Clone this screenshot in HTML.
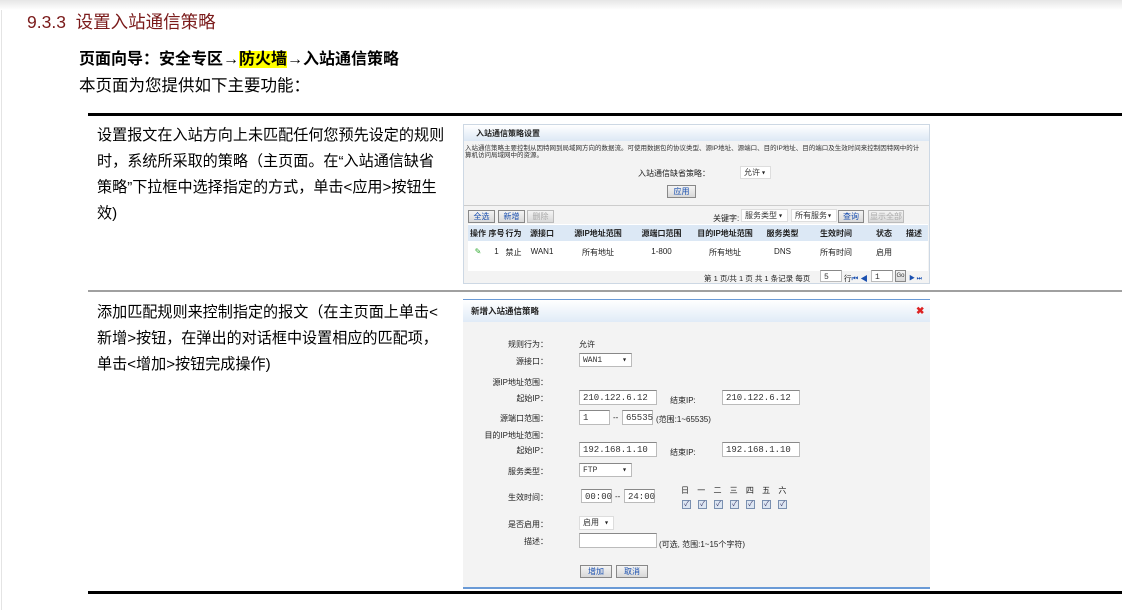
<!DOCTYPE html>
<html><head><meta charset="utf-8">
<style>
*{margin:0;padding:0;box-sizing:border-box}
body{width:1122px;height:610px;background:#fff;position:relative;overflow:hidden;font-family:"Liberation Sans","Noto Sans CJK SC",sans-serif;}
.a{position:absolute;white-space:nowrap}
.s{font-family:"Liberation Sans","Noto Sans CJK SC",sans-serif;font-size:8px;color:#222}
.inp{position:absolute;background:#fff;border:1px solid #bbb;border-top-color:#888;font-size:9px;padding:1px 3px;font-family:"Liberation Mono","Noto Sans CJK SC",monospace;color:#333;height:15px;line-height:12px}
.btn{position:absolute;background:linear-gradient(#f4f4f4,#d8d8d8);border:1px solid #888;font-size:8px;color:#1a50b0;text-align:center;height:13px;line-height:11px}
.sel:after{content:"▾";position:absolute;right:4px;top:1px;font-size:8px;color:#222}
.cb{position:absolute;width:9px;height:9px;border:1px solid #7a90b0;background:#dde6f2;font-size:7px;line-height:7px;text-align:center;color:#336}
</style></head><body>
<div class="a" style="left:0;top:0;width:1122px;height:10px;background:linear-gradient(#e6e6e6,#fff)"></div>
<div class="a" style="left:1px;top:10px;width:1px;height:600px;background:#e4e4e4"></div>
<div class="a" style="left:27px;top:9px;font-size:17.5px;color:#7a1a1a">9.3.3&nbsp; 设置入站通信策略</div>
<div class="a" style="left:79px;top:45px;font-size:16px;font-weight:bold;color:#000">页面向导：安全专区<span style="font-weight:normal">→</span><span style="background:#ffff00">防火墙</span><span style="font-weight:normal">→</span>入站通信策略</div>
<div class="a" style="left:79px;top:72px;font-size:16.5px;color:#000">本页面为您提供如下主要功能：</div>
<div class="a" style="left:88px;top:113px;width:1034px;height:3px;background:#000"></div>
<div class="a" style="left:88px;top:290px;width:1034px;height:2px;background:#a0a0a0"></div>
<div class="a" style="left:88px;top:591px;width:1034px;height:3px;background:#000"></div>
<div class="a" style="left:97px;top:123px;font-size:15.1px;line-height:26px;color:#000">设置报文在入站方向上未匹配任何您预先设定的规则<br>时，系统所采取的策略（主页面。在“入站通信缺省<br>策略”下拉框中选择指定的方式，单击&lt;应用&gt;按钮生<br>效)</div>
<div class="a" style="left:97px;top:300px;font-size:15.1px;line-height:26px;color:#000">添加匹配规则来控制指定的报文（在主页面上单击&lt;<br>新增&gt;按钮，在弹出的对话框中设置相应的匹配项，<br>单击&lt;增加&gt;按钮完成操作)</div>

<!-- screenshot 1 -->
<div class="a" style="left:463px;top:124px;width:467px;height:160px;background:#f3f3f3;border:1px solid #cdd8e4">
 <div class="a s" style="left:0;top:0;width:465px;height:16px;background:linear-gradient(#fff,#dce8f5);font-weight:bold;padding:3px 0 0 12px">入站通信策略设置</div>
 <div class="a s" style="left:1px;top:20px;font-size:6.5px;line-height:7px;white-space:normal;width:460px;color:#333">入站通信策略主要控制从因特网到局域网方向的数据流。可使用数据包的协议类型、源IP地址、源端口、目的IP地址、目的端口及生效时间来控制因特网中的计算机访问局域网中的资源。</div>
 <div class="a s" style="left:174px;top:43px">入站通信缺省策略：</div>
 <div class="inp sel" style="left:276px;top:41px;width:31px;height:13px;font-size:8px;border-color:#ddd">允许</div>
 <div class="btn" style="left:203px;top:60px;width:29px">应用</div>
 <div class="a" style="left:0;top:80px;width:465px;height:1px;background:#ccc"></div>
 <div class="btn" style="left:4px;top:85px;width:27px">全选</div>
 <div class="btn" style="left:34px;top:85px;width:27px">新增</div>
 <div class="btn" style="left:63px;top:85px;width:27px;color:#aaa;border-color:#bbb">删除</div>
 <div class="a s" style="left:249px;top:88px">关键字:</div>
 <div class="inp sel" style="left:277px;top:84px;width:47px;height:13px;font-size:8px;border-color:#ddd">服务类型</div>
 <div class="inp sel" style="left:327px;top:84px;width:46px;height:13px;font-size:8px;border-color:#ddd">所有服务</div>
 <div class="btn" style="left:374px;top:85px;width:26px">查询</div>
 <div class="btn" style="left:404px;top:85px;width:36px;color:#aaa;border-color:#bbb">显示全部</div>
 <div class="a" style="left:4px;top:99px;width:460px;height:47px;background:#fff"></div>
 <div class="a s" style="left:4px;top:100px;width:460px;height:16px;background:#dce8f5;font-weight:bold;display:flex;align-items:center;gap:0">
  <span style="width:20px;text-align:center">操作</span><span style="width:17px;text-align:center">序号</span><span style="width:17px;text-align:center">行为</span><span style="width:40px;text-align:center">源接口</span><span style="width:72px;text-align:center">源IP地址范围</span><span style="width:55px;text-align:center">源端口范围</span><span style="width:72px;text-align:center">目的IP地址范围</span><span style="width:43px;text-align:center">服务类型</span><span style="width:64px;text-align:center">生效时间</span><span style="width:32px;text-align:center">状态</span><span style="width:28px;text-align:center">描述</span></div>
 <div class="a s" style="left:4px;top:122px;width:460px;display:flex">
  <span style="width:20px;text-align:center;color:#3a3">✎</span><span style="width:17px;text-align:center">1</span><span style="width:17px;text-align:center">禁止</span><span style="width:40px;text-align:center">WAN1</span><span style="width:72px;text-align:center">所有地址</span><span style="width:55px;text-align:center">1-800</span><span style="width:72px;text-align:center">所有地址</span><span style="width:43px;text-align:center">DNS</span><span style="width:64px;text-align:center">所有时间</span><span style="width:32px;text-align:center">启用</span><span style="width:28px"></span></div>
 <div class="a s" style="left:240px;top:148px;font-size:7.5px">第 1 页/共 1 页 共 1 条记录 每页</div>
 <div class="inp" style="left:356px;top:145px;width:22px;height:12px;font-size:8px">5</div>
 <div class="a s" style="left:380px;top:148px;font-size:7.5px">行<span style="color:#1a50b0">⏮ ◀</span></div>
 <div class="inp" style="left:407px;top:145px;width:22px;height:12px;font-size:8px">1</div>
 <div class="btn" style="left:431px;top:145px;width:11px;height:12px;font-size:6px;color:#333">Go</div>
 <div class="a s" style="left:445px;top:148px;color:#1a50b0;font-size:6px">▶ ⏭</div>
</div>

<!-- screenshot 2 -->
<div class="a" style="left:463px;top:299px;width:467px;height:290px;background:#f3f3f3;border-top:1px solid #6a9ad6;border-bottom:2px solid #6a9ad6">
 <div class="a s" style="left:0;top:0;width:467px;height:22px;background:linear-gradient(#fff,#e0ebf7);font-weight:bold;padding:5px 0 0 8px;font-size:8.5px">新增入站通信策略</div>
 <div class="a" style="left:453px;top:6px;color:#d22;font-size:10px;font-weight:bold">✖</div>
 <div class="a s" style="right:382px;top:39px">规则行为：</div><div class="a s" style="left:116px;top:39px">允许</div>
 <div class="a s" style="right:382px;top:56px">源接口：</div><div class="inp sel" style="left:116px;top:53px;width:53px;height:14px;font-size:8px">WAN1</div>
 <div class="a s" style="right:382px;top:77px">源IP地址范围：</div>
 <div class="a s" style="right:382px;top:93px">起始IP：</div><div class="inp" style="left:116px;top:90px;width:78px">210.122.6.12</div>
 <div class="a s" style="left:207px;top:95px">结束IP:</div><div class="inp" style="left:259px;top:90px;width:78px">210.122.6.12</div>
 <div class="a s" style="right:382px;top:113px">源端口范围：</div><div class="inp" style="left:116px;top:110px;width:31px">1</div>
 <div class="a s" style="left:150px;top:113px">--</div><div class="inp" style="left:159px;top:110px;width:31px">65535</div>
 <div class="a s" style="left:193px;top:114px">(范围:1~65535)</div>
 <div class="a s" style="right:382px;top:130px">目的IP地址范围：</div>
 <div class="a s" style="right:382px;top:145px">起始IP：</div><div class="inp" style="left:116px;top:142px;width:78px">192.168.1.10</div>
 <div class="a s" style="left:207px;top:147px">结束IP:</div><div class="inp" style="left:259px;top:142px;width:78px">192.168.1.10</div>
 <div class="a s" style="right:382px;top:166px">服务类型：</div><div class="inp sel" style="left:116px;top:163px;width:53px;height:14px;font-size:8px">FTP</div>
 <div class="a s" style="right:382px;top:192px">生效时间：</div><div class="inp" style="left:118px;top:189px;width:31px;height:14px">00:00</div>
 <div class="a s" style="left:152px;top:192px">--</div><div class="inp" style="left:161px;top:189px;width:31px;height:14px">24:00</div>
 <div class="a s" style="left:218px;top:185px;word-spacing:6px">日 一 二 三 四 五 六</div>
 <div class="cb" style="left:219px;top:200px">✓</div><div class="cb" style="left:235px;top:200px">✓</div><div class="cb" style="left:251px;top:200px">✓</div><div class="cb" style="left:267px;top:200px">✓</div><div class="cb" style="left:283px;top:200px">✓</div><div class="cb" style="left:299px;top:200px">✓</div><div class="cb" style="left:315px;top:200px">✓</div>
 <div class="a s" style="right:382px;top:219px">是否启用：</div><div class="inp sel" style="left:116px;top:216px;width:35px;height:14px;font-size:8px;border-color:#ddd">启用</div>
 <div class="a s" style="right:382px;top:236px">描述：</div><div class="inp" style="left:116px;top:233px;width:78px"></div>
 <div class="a s" style="left:196px;top:239px">(可选, 范围:1~15个字符)</div>
 <div class="btn" style="left:117px;top:265px;width:32px">增加</div>
 <div class="btn" style="left:153px;top:265px;width:32px">取消</div>
</div>
</body></html>
